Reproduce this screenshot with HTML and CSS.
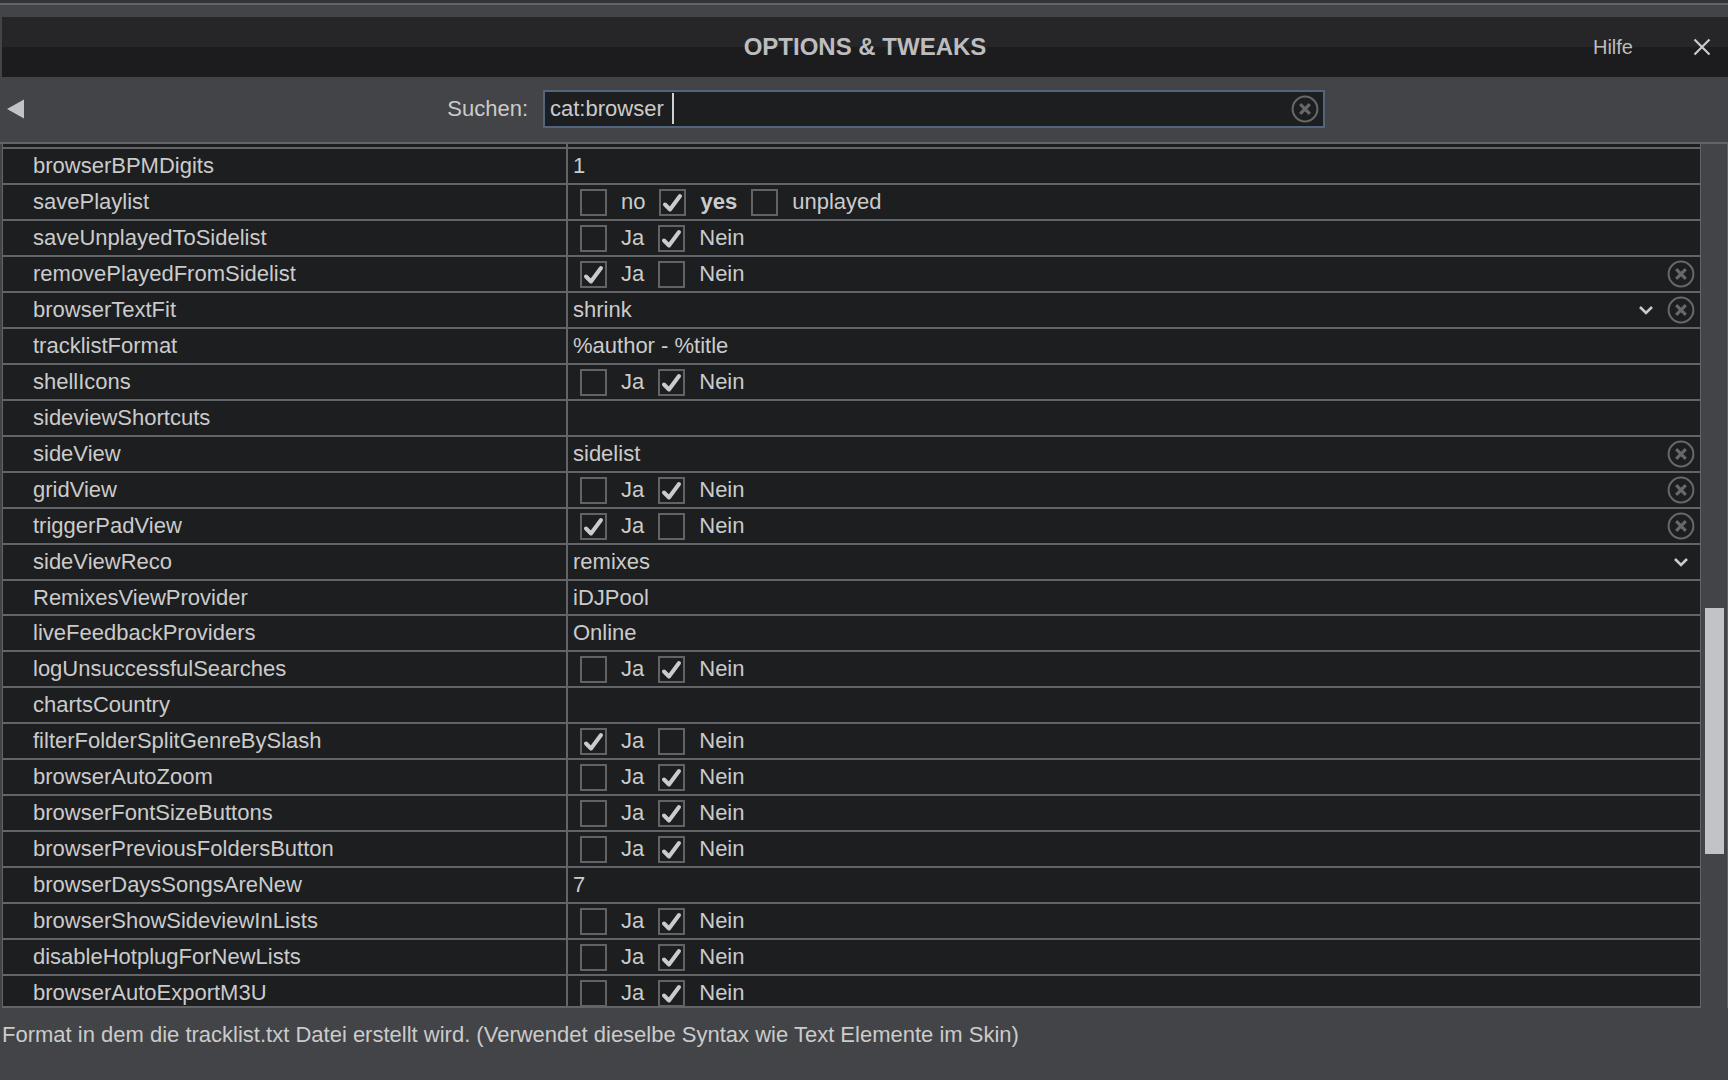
FILE: index.html
```html
<!DOCTYPE html>
<html lang="de">
<head>
<meta charset="utf-8">
<meta name="viewport" content="width=device-width, initial-scale=1">
<title>Options &amp; Tweaks</title>
<link rel="stylesheet" href="styles.css">
</head>
<body>
<svg class="symbols" aria-hidden="true">
  <symbol id="clear" viewBox="0 0 28 28"><circle cx="14" cy="14" r="12.4" fill="none" stroke="currentColor" stroke-width="2"/><path d="M9.2 9.2 18.8 18.8M18.8 9.2 9.2 18.8" fill="none" stroke="currentColor" stroke-width="3.2"/></symbol>
</svg>
<div class="dialog">
  <header class="titlebar">
    <h1 class="title">OPTIONS &amp; TWEAKS</h1>
    <div class="title-actions">
      <a class="help" href="#">Hilfe</a>
      <button class="close" type="button" aria-label="Schließen"><svg width="18" height="18" viewBox="0 0 18 18"><path d="M1.5 1.5 16.5 16.5M16.5 1.5 1.5 16.5" fill="none" stroke="currentColor" stroke-width="2.2"/></svg></button>
    </div>
  </header>
  <div class="toolbar">
    <div class="toolbar-left">
      <button class="back" type="button" aria-label="Zurück"><svg width="17" height="20" viewBox="0 0 17 20"><path d="M0 10 17 .5V19.500Z" fill="currentColor"/></svg></button>
      <label class="search-label" for="search">Suchen:</label>
    </div>
    <div class="search">
      <input class="search-input" id="search" type="text" value="cat:browser ">
      <span class="caret"></span>
      <button class="clear" type="button" aria-label="Suche löschen"><svg><use href="#clear"/></svg></button>
    </div>
  </div>
  <main class="panel">
    <div class="viewport">
      <table class="options">
        <tbody>
          <tr><th scope="row"></th><td><div class="cell"><button class="clear" type="button" aria-label="Zurücksetzen"><svg><use href="#clear"/></svg></button></div></td></tr>
          <tr><th scope="row"><label for="bpm">browserBPMDigits</label></th><td><div class="cell"><input class="text" id="bpm" type="text" value="1"></div></td></tr>
          <tr><th scope="row">savePlaylist</th><td><div class="cell"><label class="choice"><input type="checkbox">no</label><label class="choice strong"><input type="checkbox" checked>yes</label><label class="choice"><input type="checkbox">unplayed</label></div></td></tr>
          <tr><th scope="row">saveUnplayedToSidelist</th><td><div class="cell"><label class="choice"><input type="checkbox">Ja</label><label class="choice"><input type="checkbox" checked>Nein</label></div></td></tr>
          <tr><th scope="row">removePlayedFromSidelist</th><td><div class="cell"><label class="choice"><input type="checkbox" checked>Ja</label><label class="choice"><input type="checkbox">Nein</label><button class="clear" type="button" aria-label="Zurücksetzen"><svg><use href="#clear"/></svg></button></div></td></tr>
          <tr><th scope="row"><label for="textfit">browserTextFit</label></th><td><div class="cell"><select class="select" id="textfit"><option>shrink</option></select><button class="clear" type="button" aria-label="Zurücksetzen"><svg><use href="#clear"/></svg></button></div></td></tr>
          <tr><th scope="row"><label for="format">tracklistFormat</label></th><td><div class="cell"><input class="text" id="format" type="text" value="%author - %title"></div></td></tr>
          <tr><th scope="row">shellIcons</th><td><div class="cell"><label class="choice"><input type="checkbox">Ja</label><label class="choice"><input type="checkbox" checked>Nein</label></div></td></tr>
          <tr><th scope="row"><label for="shortcuts">sideviewShortcuts</label></th><td><div class="cell"><input class="text" id="shortcuts" type="text" value=""></div></td></tr>
          <tr><th scope="row"><label for="sideview">sideView</label></th><td><div class="cell"><input class="text" id="sideview" type="text" value="sidelist"><button class="clear" type="button" aria-label="Zurücksetzen"><svg><use href="#clear"/></svg></button></div></td></tr>
          <tr><th scope="row">gridView</th><td><div class="cell"><label class="choice"><input type="checkbox">Ja</label><label class="choice"><input type="checkbox" checked>Nein</label><button class="clear" type="button" aria-label="Zurücksetzen"><svg><use href="#clear"/></svg></button></div></td></tr>
          <tr><th scope="row">triggerPadView</th><td><div class="cell"><label class="choice"><input type="checkbox" checked>Ja</label><label class="choice"><input type="checkbox">Nein</label><button class="clear" type="button" aria-label="Zurücksetzen"><svg><use href="#clear"/></svg></button></div></td></tr>
          <tr><th scope="row"><label for="reco">sideViewReco</label></th><td><div class="cell"><select class="select" id="reco"><option>remixes</option></select></div></td></tr>
          <tr><th scope="row"><label for="remixes">RemixesViewProvider</label></th><td><div class="cell"><input class="text" id="remixes" type="text" value="iDJPool"></div></td></tr>
          <tr><th scope="row"><label for="feedback">liveFeedbackProviders</label></th><td><div class="cell"><input class="text" id="feedback" type="text" value="Online"></div></td></tr>
          <tr><th scope="row">logUnsuccessfulSearches</th><td><div class="cell"><label class="choice"><input type="checkbox">Ja</label><label class="choice"><input type="checkbox" checked>Nein</label></div></td></tr>
          <tr><th scope="row"><label for="charts">chartsCountry</label></th><td><div class="cell"><input class="text" id="charts" type="text" value=""></div></td></tr>
          <tr><th scope="row">filterFolderSplitGenreBySlash</th><td><div class="cell"><label class="choice"><input type="checkbox" checked>Ja</label><label class="choice"><input type="checkbox">Nein</label></div></td></tr>
          <tr><th scope="row">browserAutoZoom</th><td><div class="cell"><label class="choice"><input type="checkbox">Ja</label><label class="choice"><input type="checkbox" checked>Nein</label></div></td></tr>
          <tr><th scope="row">browserFontSizeButtons</th><td><div class="cell"><label class="choice"><input type="checkbox">Ja</label><label class="choice"><input type="checkbox" checked>Nein</label></div></td></tr>
          <tr><th scope="row">browserPreviousFoldersButton</th><td><div class="cell"><label class="choice"><input type="checkbox">Ja</label><label class="choice"><input type="checkbox" checked>Nein</label></div></td></tr>
          <tr><th scope="row"><label for="days">browserDaysSongsAreNew</label></th><td><div class="cell"><input class="text" id="days" type="text" value="7"></div></td></tr>
          <tr><th scope="row">browserShowSideviewInLists</th><td><div class="cell"><label class="choice"><input type="checkbox">Ja</label><label class="choice"><input type="checkbox" checked>Nein</label></div></td></tr>
          <tr><th scope="row">disableHotplugForNewLists</th><td><div class="cell"><label class="choice"><input type="checkbox">Ja</label><label class="choice"><input type="checkbox" checked>Nein</label></div></td></tr>
          <tr><th scope="row">browserAutoExportM3U</th><td><div class="cell"><label class="choice"><input type="checkbox">Ja</label><label class="choice"><input type="checkbox" checked>Nein</label></div></td></tr>
        </tbody>
      </table>
    </div>
    <div class="scrollbar"><div class="thumb"></div></div>
  </main>
  <footer class="hint">Format in dem die tracklist.txt Datei erstellt wird. (Verwendet dieselbe Syntax wie Text Elemente im Skin)</footer>
</div>
</body>
</html>
```
FILE: styles.css
```css
:root {
  --bg: #434447;
  --field: #1d1e20;
  --line: #636467;
  --text: #cbcbcb;
  --muted: #68686a;
}

* {
  box-sizing: border-box;
}

body {
  margin: 0;
  background: var(--bg);
  color: var(--text);
  font: 22px/26px "Liberation Sans", Arial, sans-serif;
}

button,
input,
select {
  margin: 0;
  padding: 0;
  border: 0;
  outline: 0;
  background: none;
  color: inherit;
  font: inherit;
}

button {
  display: flex;
}

.symbols {
  display: none;
}

.dialog {
  display: flex;
  flex-direction: column;
  height: 100vh;
  border-top: 3px solid #343438;
}

.titlebar {
  display: grid;
  grid-template-columns: 1fr auto 1fr;
  align-items: center;
  height: 74px;
  flex: none;
  padding: 12px 0 0 2px;
  border-top: 2px solid var(--line);
  background: linear-gradient(#262628 50%, #1c1c1e 50%) content-box;
}

.title {
  grid-column: 2;
  margin: 0;
  color: #bdbdbf;
  font-size: 24px;
  line-height: 28px;
}

.title-actions {
  display: flex;
  justify-content: flex-end;
  align-items: center;
  gap: 60px;
  padding-right: 17px;
}

.help {
  color: #bdbdbf;
  font-size: 20px;
  text-decoration: none;
}

.toolbar {
  display: grid;
  grid-template-columns: 528fr 782fr 388fr;
  column-gap: 15px;
  align-items: center;
  height: 65px;
  flex: none;
  padding-bottom: 1px;
}

.toolbar-left {
  display: flex;
  align-items: center;
  justify-content: space-between;
  padding-left: 7px;
}

.back {
  color: #c2c3c7;
}

.search {
  position: relative;
  display: flex;
  align-items: center;
  height: 38px;
  padding: 0 4px 0 5px;
  border: 2px solid #53657d;
  background: var(--field);
}

.search-input {
  flex: 1;
  min-width: 0;
}

.caret {
  position: absolute;
  left: 127px;
  top: 1px;
  width: 2px;
  height: 31px;
  background: #d0d0d0;
}

.clear {
  flex: none;
  margin-left: auto;
  color: var(--muted);
}

.clear svg {
  width: 28px;
  height: 28px;
}

.panel {
  display: flex;
  flex: 1;
  min-height: 0;
  border-top: 2px solid var(--line);
  border-right: 1px solid var(--line);
}

.viewport {
  display: flex;
  flex-direction: column;
  flex: 1;
  overflow: hidden;
  margin-left: 2px;
  border: solid var(--line);
  border-width: 0 1px 2px;
  background: var(--field);
}

/* The list is scrolled so that only the foot of its first row shows. */
.options {
  width: 100%;
  margin-top: -31px;
  border-collapse: separate;
  border-spacing: 0;
  table-layout: fixed;
}

.options th,
.options td {
  height: 36px;
  padding: 0;
  border-bottom: 2px solid var(--line);
  font-weight: 400;
  text-align: left;
}

.options tr:nth-child(14n) > * {
  height: 35px;
}

.options th {
  width: 565px;
  padding-left: 30px;
  border-right: 2px solid var(--line);
}

.cell {
  display: flex;
  align-items: center;
  gap: 7px;
  height: 28px;
  padding: 0 5px;
}

.choice {
  display: flex;
  align-items: center;
  gap: 14px;
  padding-left: 7px;
}

.strong {
  font-weight: 700;
}

.choice input {
  appearance: none;
  width: 27px;
  height: 27px;
  border: 2px solid #626365;
}

.choice input:checked {
  background: url("data:image/svg+xml,%3Csvg xmlns='http://www.w3.org/2000/svg' viewBox='0 0 27 27'%3E%3Cpath d='M6 15.500 11 20.500 21 7' fill='none' stroke='%23cbcbcd' stroke-width='4' stroke-linecap='round' stroke-linejoin='round'/%3E%3C/svg%3E") border-box center / 27px 27px no-repeat;
}

.text {
  flex: 1;
  min-width: 0;
}

.select {
  flex: 1;
  height: 26px;
  appearance: none;
  background: url("data:image/svg+xml,%3Csvg xmlns='http://www.w3.org/2000/svg' viewBox='0 0 14 10'%3E%3Cpath d='M1 2 7 8 13 2' fill='none' stroke='%23cbcbcd' stroke-width='2.600'/%3E%3C/svg%3E") right 7px center / 14px 10px no-repeat;
}

.scrollbar {
  flex: none;
  width: 26px;
  padding: 0 3px 0 4px;
}

.thumb {
  height: 246px;
  margin-top: 464px;
  background: #c2c3c7;
}

.hint {
  flex: none;
  height: 72px;
  padding: 14px 2px;
}
```
